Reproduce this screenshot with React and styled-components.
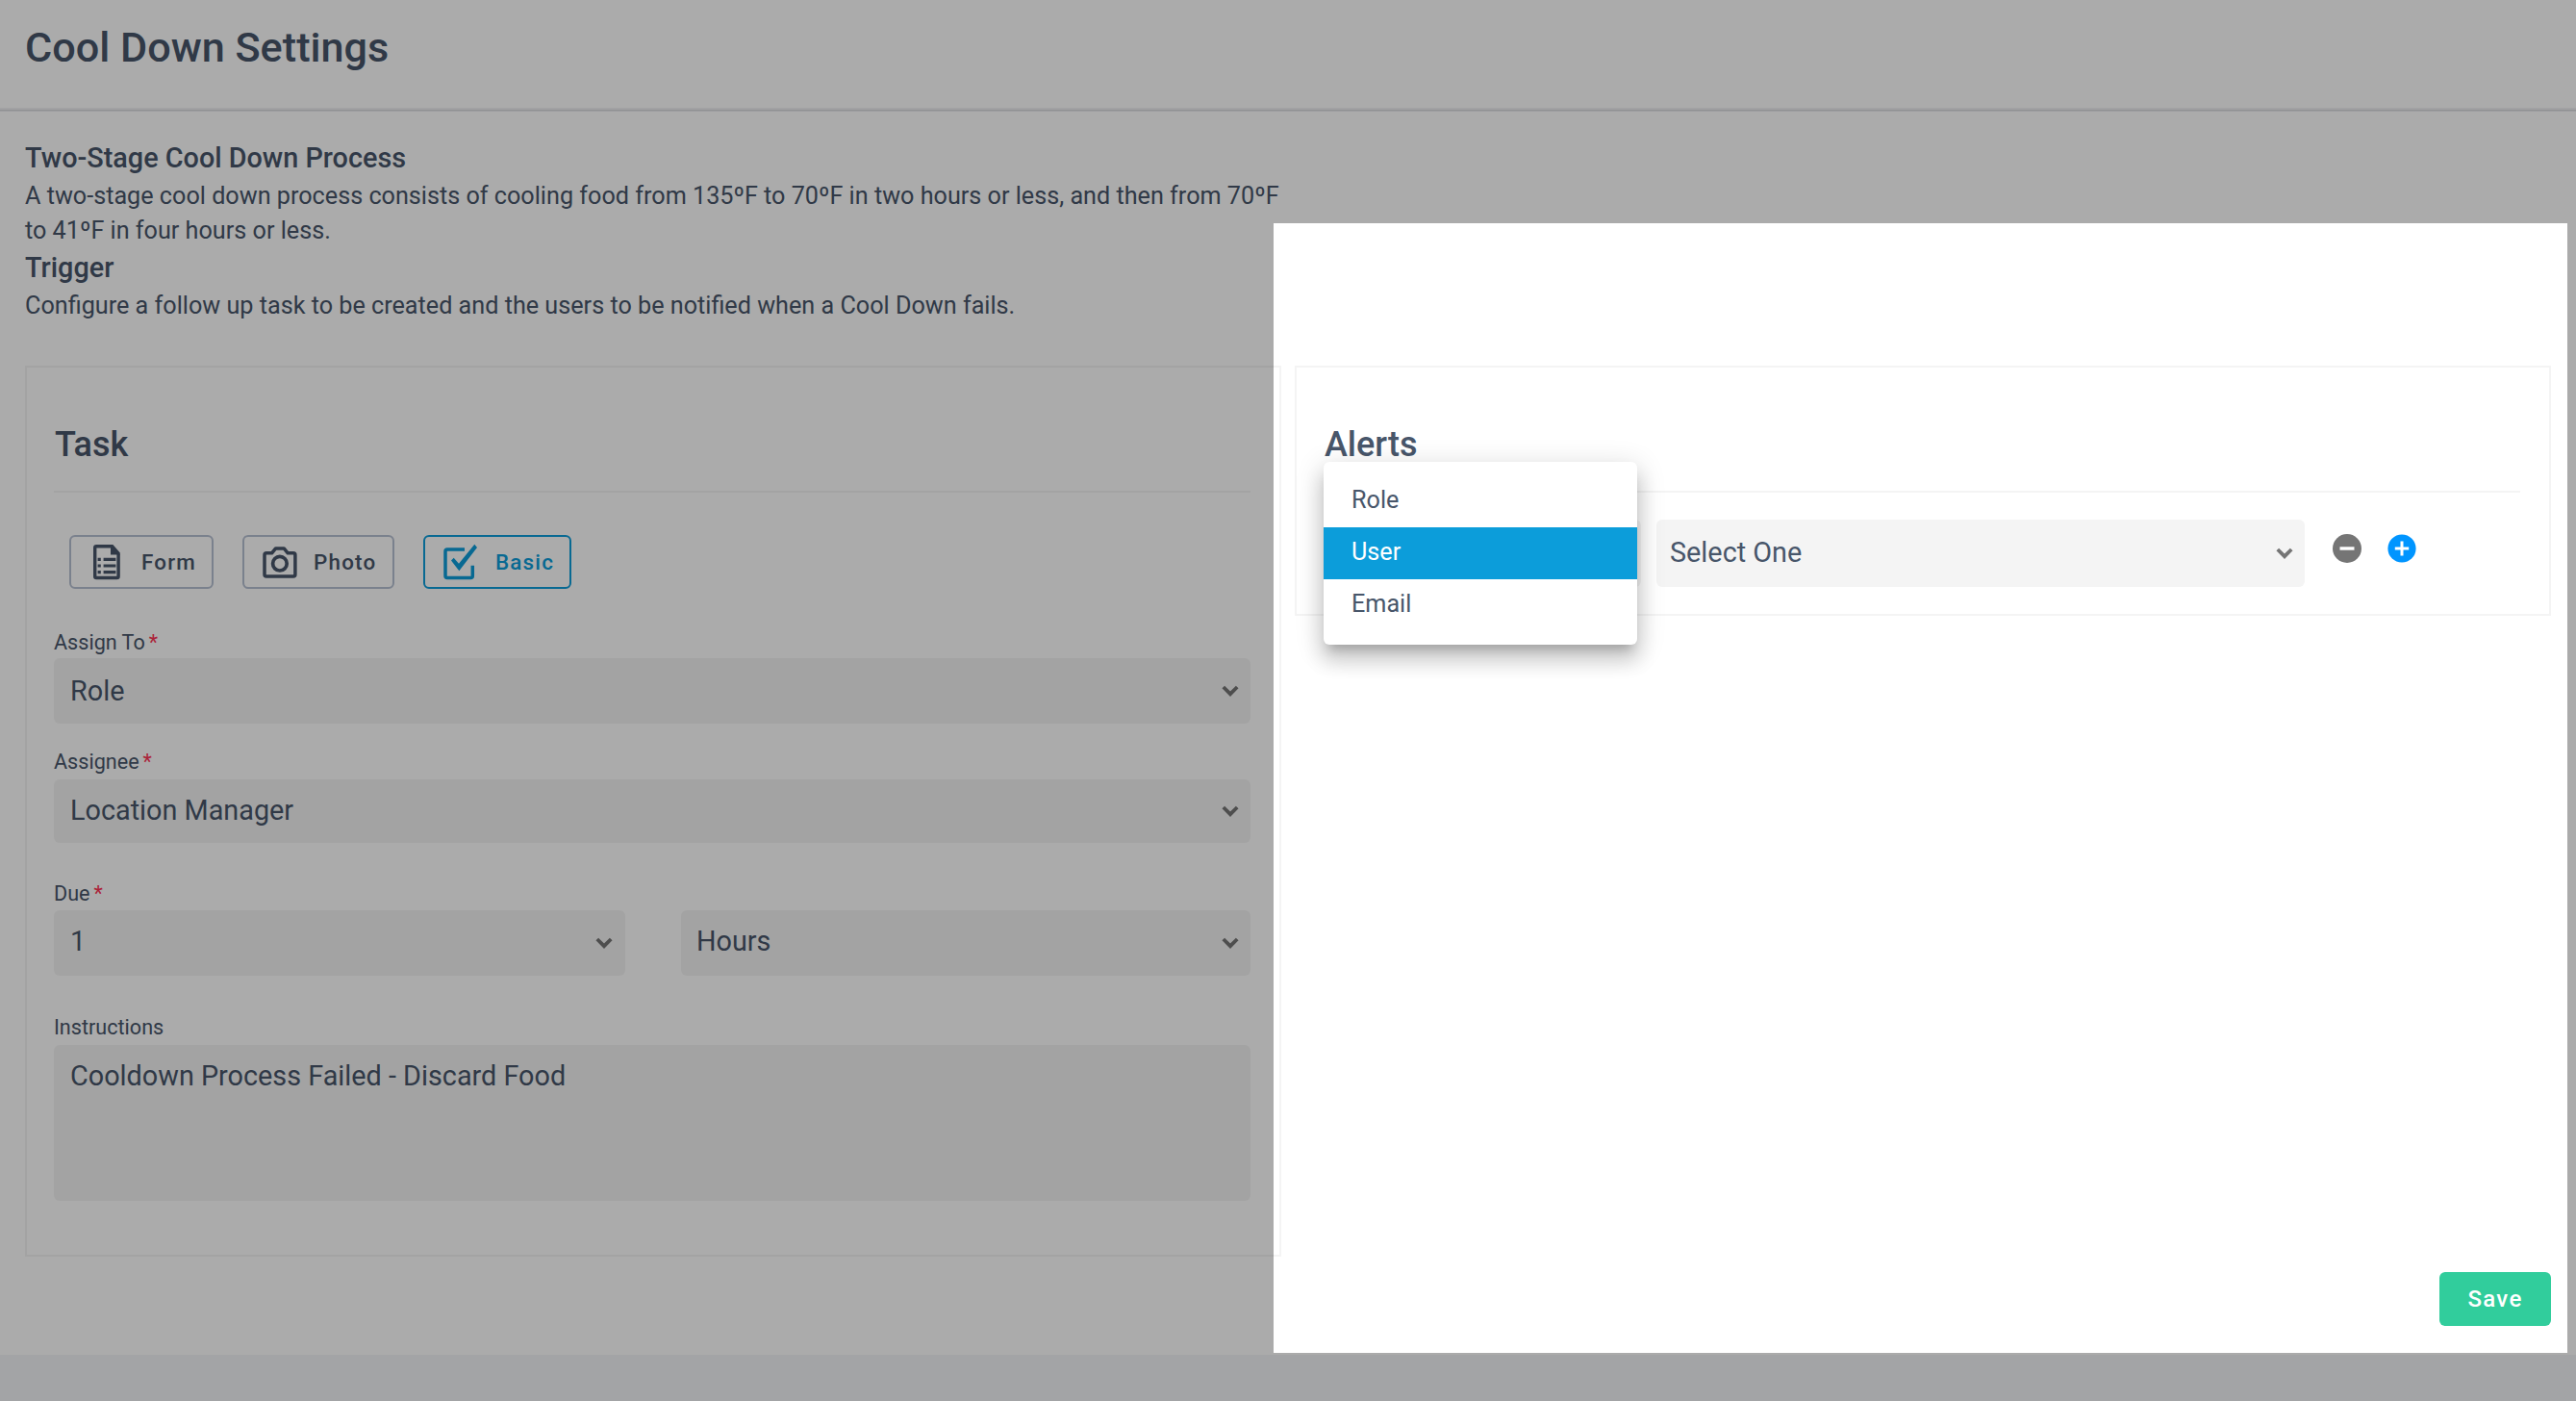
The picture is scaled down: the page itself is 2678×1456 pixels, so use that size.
import React, { useState } from 'react';
import styled, { createGlobalStyle } from 'styled-components'


const GlobalStyle = createGlobalStyle`
    body{
        margin: 0;
        background-color: #f3f5f8;
        color: #48566a;
        font-family: Roboto, "Liberation Sans", sans-serif;
        overflow: hidden;
    }
`

const Page = styled.div`
    box-sizing: border-box;
    position: relative;
    width: 2678px;
    height: 1456px;
    overflow: hidden;
    padding-bottom: 48px;
`

const Content = styled.div`
    box-sizing: border-box;
    height: 1408px;
    background-color: white;
`

const Header = styled.header`
    box-sizing: border-box;
    height: 114px;
    padding: 26px 26px 0;
    border-bottom: 2px solid #f0f0f3;
    box-shadow: 0 1px 0 #d7d8dc, 0 2px 0 #eaeaed;
`

const PageTitle = styled.h1`
    margin: 0;
    font-size: 43.2px;
    line-height: 48px;
    font-weight: 500;
`

const Main = styled.main`
    box-sizing: border-box;
    height: 1294px;
    padding: 32px 26px 30px;
    display: flex;
    flex-direction: column;
`

const Intro = styled.section`
    width: 1310px;
`

const IntroTitle = styled.h2`
    margin: 0 0 4px;
    font-size: 28.8px;
    line-height: 36px;
    font-weight: 500;
`

const IntroText = styled.p`
    margin: 0 0 2px;
    font-size: 25.2px;
    line-height: 36px;
`

const Panels = styled.div`
    display: flex;
    align-items: flex-start;
    gap: 14px;
    margin-top: 42px;
`

const Panel = styled.section`
    box-sizing: border-box;
    width: 1306px;
    height: ${props => props.$height}px;
    border: 2px solid #f4f4f4;
    padding: 58px 30px 0 28px;
`

const PanelTitle = styled.h2`
    margin: 0;
    padding: 0 0 26px 1px;
    border-bottom: 2px solid #f4f4f4;
    font-size: 36px;
    line-height: 44px;
    font-weight: 500;
`

const TaskTypes = styled.div`
    display: flex;
    gap: 30px;
    margin: 44px 0 0 16px;
`

const TypeBtn = styled.button`
    box-sizing: border-box;
    display: flex;
    align-items: center;
    gap: ${props => props.$gap}px;
    width: ${props => props.$width}px;
    height: 56px;
    padding: 0 0 0 19px;
    border: 2px solid ${props => props.$active ? '#0c9dda' : '#b7c0d2'};
    border-radius: 6px;
    background: none;
    color: ${props => props.$active ? '#0c9dda' : '#48566a'};
    font-family: inherit;
    font-size: 22.4px;
    font-weight: 500;
    letter-spacing: 1.2px;
    cursor: pointer;

    svg{
        flex: none;
    }
`

const Field = styled.div`
    flex: ${props => props.$flex || 'none'};
    margin-top: ${props => props.$top || 0}px;
`

const Label = styled.label`
    display: block;
    height: ${props => props.$height || 30}px;
    font-size: 21.6px;
    line-height: 24px;
`

const Required = styled.span`
    margin-left: 4px;
    color: #ff3355;
`

const SelectBox = styled.div`
    box-sizing: border-box;
    display: flex;
    align-items: center;
    justify-content: space-between;
    width: ${props => props.$width ? `${props.$width}px` : 'auto'};
    height: ${props => props.$height || 68}px;
    padding: 0 ${props => props.$right || 12}px 0 ${props => props.$left || 17}px;
    border-radius: 6px;
    background-color: #f4f4f4;
    font-size: 28.8px;
    line-height: 34px;
`

const SelectValue = styled.span`
    margin-bottom: ${props => props.$lift || 0}px;
`

const DueRow = styled.div`
    display: flex;
    align-items: flex-end;
    gap: 58px;
`

const Instructions = styled.div`
    box-sizing: border-box;
    height: 162px;
    padding: 15px 17px;
    border-radius: 6px;
    background-color: #f4f4f4;
    font-size: 28.8px;
    line-height: 34px;
`

const AlertRow = styled.div`
    position: relative;
    display: flex;
    align-items: center;
    margin-top: 28px;
`

const AlertTarget = styled.div`
    margin-left: 16px;
`

const RoundBtn = styled.button`
    display: flex;
    margin: 0 0 10px ${props => props.$left}px;
    padding: 0;
    border: none;
    background: none;
    cursor: pointer;
`

const Menu = styled.ul`
    box-sizing: border-box;
    position: absolute;
    top: -60px;
    left: 0;
    z-index: 2;
    width: 326px;
    height: 190px;
    margin: 0;
    padding: 14px 0;
    list-style: none;
    border-radius: 6px;
    background-color: white;
    box-shadow: 0 10px 10px -6px rgba(0,0,0,0.2),
        0 16px 20px 2px rgba(0,0,0,0.14),
        0 6px 28px 4px rgba(0,0,0,0.12);
`

const MenuItem = styled.li`
    padding: 0 0 2px 29px;
    font-size: 25.2px;
    line-height: 52px;
    background-color: ${props => props.$active ? '#0c9dda' : 'transparent'};
    color: ${props => props.$active ? 'white' : 'inherit'};
    cursor: pointer;
`

const SaveBtn = styled.button`
    align-self: flex-end;
    margin-top: auto;
    width: 116px;
    height: 56px;
    padding: 0;
    border: none;
    border-radius: 6px;
    background-color: #31cd9c;
    color: white;
    font-family: inherit;
    font-size: 24px;
    font-weight: 500;
    letter-spacing: 1.3px;
    cursor: pointer;
`

// everything outside of the highlighted area is dimmed by the spread shadow
const Spotlight = styled.div`
    position: absolute;
    top: 232px;
    left: 1324px;
    width: 1345px;
    height: 1174px;
    box-shadow: 0 0 0 2700px rgba(0,0,0,0.33);
    pointer-events: none;
`


const Chevron = () => (
    <svg width="18" height="12" viewBox="0 0 18 12">
        <path d="M1.8 2 L9 9.2 L16.2 2" fill="none" stroke="#757575" strokeWidth="3.8" />
    </svg>
)

const FormIcon = () => (
    <svg width="38" height="38" viewBox="1 0 38 38">
        <path d="M23 2.7 H8.2 Q6.7 2.7 6.7 4.2 V34 Q6.7 35.5 8.2 35.5 H29.6 Q31.1 35.5 31.1 34 V11" fill="none" stroke="currentColor" strokeWidth="3.4" />
        <path d="M23 1 H25.4 L32.8 9.5 V11.5 H23 Z" fill="currentColor" />
        <path d="M9.6 16.3 H12.8 M9.6 23 H12.8 M9.6 29.7 H12.8 M15.6 16.3 H28.4 M15.6 23 H28.4 M15.6 29.7 H28.4" stroke="currentColor" strokeWidth="3.2" />
    </svg>
)

const PhotoIcon = () => (
    <svg width="38" height="38" viewBox="0 0 38 38">
        <path d="M4 9.8 H9.6 L13.6 4.9 H22.2 L26.2 9.8 H31.9 Q33.9 9.8 33.9 11.8 V32 Q33.9 34 31.9 34 H4 Q2 34 2 32 V11.8 Q2 9.8 4 9.8 Z" fill="none" stroke="currentColor" strokeWidth="3.5" strokeLinejoin="round" />
        <circle cx="17.9" cy="20.7" r="7.3" fill="none" stroke="currentColor" strokeWidth="3.7" />
    </svg>
)

const BasicIcon = () => (
    <svg width="38" height="38" viewBox="0 0 38 38">
        <path d="M22 6 H4 Q2 6 2 8 V33.4 Q2 35.4 4 35.4 H28.3 Q30.3 35.4 30.3 33.4 V22.7" fill="none" stroke="currentColor" strokeWidth="3.5" />
        <path d="M8 17.6 L10.7 14.7 L16 20.7 L32.3 0.7 L35 4 L16.3 28.3 Z" fill="currentColor" />
    </svg>
)

const MinusIcon = () => (
    <svg width="30" height="30" viewBox="0 0 30 30">
        <circle cx="15" cy="15" r="15" fill="#757575" />
        <path d="M7.5 15 H22.5" stroke="white" strokeWidth="3.4" />
    </svg>
)

const PlusIcon = () => (
    <svg width="30" height="30" viewBox="0 0 30 30">
        <circle cx="15" cy="15" r="14.6" fill="#0095ff" />
        <path d="M7.8 15 H22.2 M15 7.6 V22.4" stroke="white" strokeWidth="3" />
    </svg>
)

const Select = ({ value, $lift, ...rest }) => (
    <SelectBox {...rest}>
        <SelectValue $lift={$lift}>{value}</SelectValue>
        <Chevron />
    </SelectBox>
)

const types = [
    { name: 'Form', icon: <FormIcon />, width: 150, gap: 16 },
    { name: 'Photo', icon: <PhotoIcon />, width: 158, gap: 15 },
    { name: 'Basic', icon: <BasicIcon />, width: 154, gap: 16 },
]

const targets = ['Role', 'User', 'Email']


export default function App(){
    const [type, setType] = useState('Basic')
    const [target, setTarget] = useState('User')
    const [open, setOpen] = useState(true)

    const pickTarget = name => {
        setTarget(name)
        setOpen(false)
    }

    return(
        <Page>
            <GlobalStyle />
            <Content>
                <Header>
                    <PageTitle>Cool Down Settings</PageTitle>
                </Header>
                <Main>
                    <Intro>
                        <IntroTitle>Two-Stage Cool Down Process</IntroTitle>
                        <IntroText>
                            A two-stage cool down process consists of cooling food from 135ºF to 70ºF in two hours or less, and then from 70ºF to 41ºF in four hours or less.
                        </IntroText>
                        <IntroTitle>Trigger</IntroTitle>
                        <IntroText>
                            Configure a follow up task to be created and the users to be notified when a Cool Down fails.
                        </IntroText>
                    </Intro>
                    <Panels>
                        <Panel $height={926}>
                            <PanelTitle>Task</PanelTitle>
                            <TaskTypes>
                                {types.map(t => (
                                    <TypeBtn
                                        key={t.name}
                                        $width={t.width}
                                        $gap={t.gap}
                                        $active={t.name === type}
                                        onClick={() => setType(t.name)}
                                    >
                                        {t.icon}
                                        {t.name}
                                    </TypeBtn>
                                ))}
                            </TaskTypes>
                            <Field $top={44}>
                                <Label $height={28}>Assign To<Required>*</Required></Label>
                                <Select value="Role" />
                            </Field>
                            <Field $top={28}>
                                <Label>Assignee<Required>*</Required></Label>
                                <Select value="Location Manager" $height={66} $lift={2} />
                            </Field>
                            <DueRow>
                                <Field $top={41} $flex="0 0 594px">
                                    <Label $height={29}>Due<Required>*</Required></Label>
                                    <Select value="1" $right={13} $lift={4} />
                                </Field>
                                <Field $flex="1">
                                    <Select value="Hours" $left={16} $lift={4} />
                                </Field>
                            </DueRow>
                            <Field $top={42}>
                                <Label>Instructions</Label>
                                <Instructions>Cooldown Process Failed - Discard Food</Instructions>
                            </Field>
                        </Panel>
                        <Panel $height={260}>
                            <PanelTitle>Alerts</PanelTitle>
                            <AlertRow>
                                <Select value={open ? '' : target} $width={330} $height={70} />
                                <AlertTarget>
                                    <Select value="Select One" $width={674} $height={70} $left={14} $lift={2} />
                                </AlertTarget>
                                <RoundBtn $left={29}><MinusIcon /></RoundBtn>
                                <RoundBtn $left={27}><PlusIcon /></RoundBtn>
                                {open && (
                                    <Menu>
                                        {targets.map(name => (
                                            <MenuItem
                                                key={name}
                                                $active={name === target}
                                                onClick={() => pickTarget(name)}
                                            >
                                                {name}
                                            </MenuItem>
                                        ))}
                                    </Menu>
                                )}
                            </AlertRow>
                        </Panel>
                    </Panels>
                    <SaveBtn>Save</SaveBtn>
                </Main>
            </Content>
            <Spotlight />
        </Page>
    )
}
